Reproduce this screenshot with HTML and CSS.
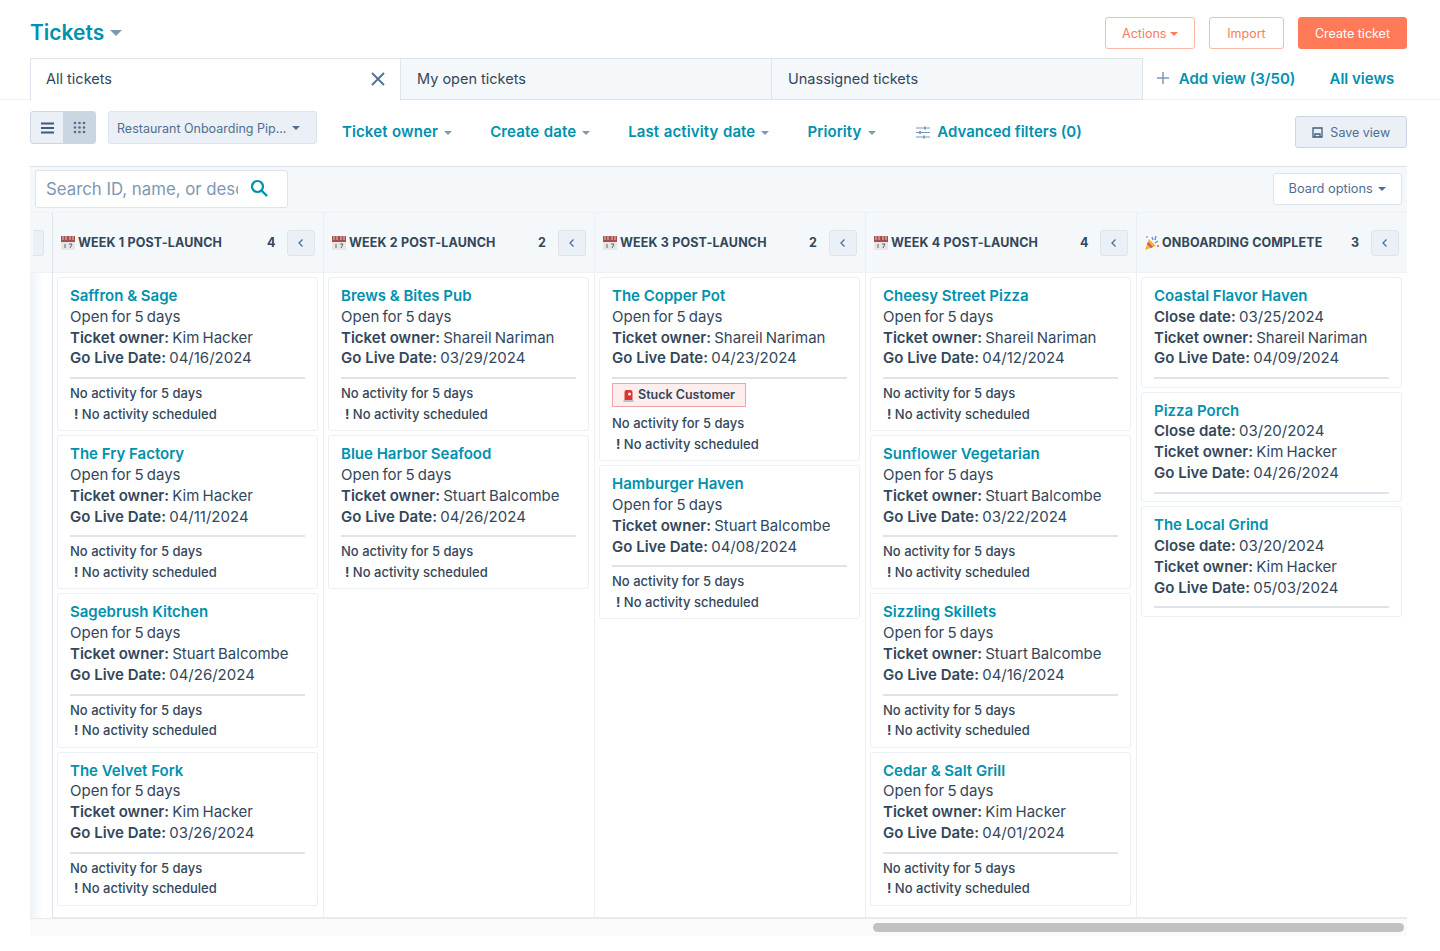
FILE: index.html
```html
<!DOCTYPE html>
<html lang="en">
<head>
    <meta charset="UTF-8">
    <meta name="viewport" content="width=device-width, initial-scale=1.0">
    <title>Tickets</title>
    <link rel="stylesheet" href="styles.css">
</head>
<body>
    <svg width="0" height="0" class="defs">
        <symbol id="cal" viewBox="0 0 16 16">
            <rect x="1" y="1" width="14" height="14" fill="#e8e6e4"/>
            <rect x="1" y="1" width="14" height="6" fill="#a5504f"/>
            <path d="M3 1v4M6 1v4M10 1v4M13 1v4" stroke="#e3c6c4" stroke-width="1"/>
            <path d="M5 9v4M9 9h3l-2 4" stroke="#5f6b78" stroke-width="1" fill="none"/>
        </symbol>
        <symbol id="back" viewBox="0 0 10 12">
            <path d="M6.500 2.500 3 6l3.500 3.500" stroke="#506e91" stroke-width="1.300" fill="none"/>
        </symbol>
    </svg>

    <header class="top">
        <h1 class="title">Tickets <span class="caret caret-big"></span></h1>
        <div class="actions">
            <button class="btn btn-line">Actions <span class="caret caret-orange"></span></button>
            <button class="btn btn-line btn-import">Import</button>
            <button class="btn btn-fill">Create ticket</button>
        </div>
    </header>

    <nav class="tabs">
        <div class="tab tab-active">All tickets
            <svg class="close" width="14" height="14" viewBox="0 0 14 14"><path d="M1 1l12 12M13 1 1 13" stroke="#506e91" stroke-width="1.800"/></svg>
        </div>
        <div class="tab">My open tickets</div>
        <div class="tab">Unassigned tickets</div>
        <div class="tab-links">
            <a class="add-view"><svg width="12" height="12" viewBox="0 0 12 12"><path d="M6 0v12M0 6h12" stroke="#7c98b6" stroke-width="1.500"/></svg> Add view (3/50)</a>
            <a>All views</a>
        </div>
    </nav>

    <section class="filters">
        <div class="toggle">
            <span class="toggle-item">
                <svg width="13" height="12" viewBox="0 0 13 12"><path d="M0 1.500h13M0 6h13M0 10.500h13" stroke="#425b76" stroke-width="2.200"/></svg>
            </span>
            <span class="toggle-item toggle-on">
                <svg width="13" height="13" viewBox="0 0 13 13" fill="#506e91"><circle cx="2" cy="2" r="1.300"/><circle cx="6.500" cy="2" r="1.300"/><circle cx="11" cy="2" r="1.300"/><circle cx="2" cy="6.500" r="1.300"/><circle cx="6.500" cy="6.500" r="1.300"/><circle cx="11" cy="6.500" r="1.300"/><circle cx="2" cy="11" r="1.300"/><circle cx="6.500" cy="11" r="1.300"/><circle cx="11" cy="11" r="1.300"/></svg>
            </span>
        </div>
        <div class="pipeline">Restaurant Onboarding Pip... <span class="caret caret-dark"></span></div>
        <div class="filter-links">
            <a>Ticket owner <span class="caret"></span></a>
            <a>Create date <span class="caret"></span></a>
            <a>Last activity date <span class="caret"></span></a>
            <a>Priority <span class="caret"></span></a>
            <a class="advanced">
                <svg width="14" height="13" viewBox="0 0 14 13"><path d="M0 2h14M0 6.500h14M0 11h14" stroke="#7c98b6" stroke-width="1.200"/><path d="M9 .5v3M4 5v3M8 9.500v3" stroke="#7c98b6" stroke-width="1.800"/></svg>
                Advanced filters (0)
            </a>
        </div>
        <button class="btn-save">
            <svg width="11" height="11" viewBox="0 0 11 11"><path d="M1 1h9v9H1zM3 10V7h5v3" stroke="#425b76" stroke-width="1.300" fill="none"/></svg>
            Save view
        </button>
    </section>

    <section class="board">
        <div class="board-tools">
            <div class="search">
                <input class="search-input" type="text" placeholder="Search ID, name, or description">
                <svg width="19" height="19" viewBox="0 0 19 19"><circle cx="7.500" cy="7.500" r="5.500" stroke="#0091ae" stroke-width="2.200" fill="none"/><path d="M11.500 11.500 17 17" stroke="#0091ae" stroke-width="2.400"/></svg>
            </div>
            <button class="board-options">Board options <span class="caret caret-dark"></span></button>
        </div>

        <div class="columns">
            <div class="col col-stub">
                <div class="col-head"><span class="stub-btn"></span></div>
                <div class="col-body"></div>
            </div>

            <div class="col">
                <div class="col-head">
                    <svg class="emoji"><use href="#cal"/></svg>
                    <span class="col-name">WEEK 1 POST-LAUNCH</span>
                    <span class="col-count">4</span>
                    <span class="col-btn"><svg width="10" height="12"><use href="#back"/></svg></span>
                </div>
                <div class="col-body">
                    <article class="card">
                        <a class="card-name">Saffron &amp; Sage</a>
                        <p>Open for 5 days</p>
                        <p><b>Ticket owner:</b> Kim Hacker</p>
                        <p><b>Go Live Date:</b> 04/16/2024</p>
                        <hr>
                        <p class="note">No activity for 5 days</p>
                        <p class="note note-warn"><i>!</i> No activity scheduled</p>
                    </article>
                    <article class="card">
                        <a class="card-name">The Fry Factory</a>
                        <p>Open for 5 days</p>
                        <p><b>Ticket owner:</b> Kim Hacker</p>
                        <p><b>Go Live Date:</b> 04/11/2024</p>
                        <hr>
                        <p class="note">No activity for 5 days</p>
                        <p class="note note-warn"><i>!</i> No activity scheduled</p>
                    </article>
                    <article class="card">
                        <a class="card-name">Sagebrush Kitchen</a>
                        <p>Open for 5 days</p>
                        <p><b>Ticket owner:</b> Stuart Balcombe</p>
                        <p><b>Go Live Date:</b> 04/26/2024</p>
                        <hr>
                        <p class="note">No activity for 5 days</p>
                        <p class="note note-warn"><i>!</i> No activity scheduled</p>
                    </article>
                    <article class="card">
                        <a class="card-name">The Velvet Fork</a>
                        <p>Open for 5 days</p>
                        <p><b>Ticket owner:</b> Kim Hacker</p>
                        <p><b>Go Live Date:</b> 03/26/2024</p>
                        <hr>
                        <p class="note">No activity for 5 days</p>
                        <p class="note note-warn"><i>!</i> No activity scheduled</p>
                    </article>
                </div>
            </div>

            <div class="col">
                <div class="col-head">
                    <svg class="emoji"><use href="#cal"/></svg>
                    <span class="col-name">WEEK 2 POST-LAUNCH</span>
                    <span class="col-count">2</span>
                    <span class="col-btn"><svg width="10" height="12"><use href="#back"/></svg></span>
                </div>
                <div class="col-body">
                    <article class="card">
                        <a class="card-name">Brews &amp; Bites Pub</a>
                        <p>Open for 5 days</p>
                        <p><b>Ticket owner:</b> Shareil Nariman</p>
                        <p><b>Go Live Date:</b> 03/29/2024</p>
                        <hr>
                        <p class="note">No activity for 5 days</p>
                        <p class="note note-warn"><i>!</i> No activity scheduled</p>
                    </article>
                    <article class="card">
                        <a class="card-name">Blue Harbor Seafood</a>
                        <p>Open for 5 days</p>
                        <p><b>Ticket owner:</b> Stuart Balcombe</p>
                        <p><b>Go Live Date:</b> 04/26/2024</p>
                        <hr>
                        <p class="note">No activity for 5 days</p>
                        <p class="note note-warn"><i>!</i> No activity scheduled</p>
                    </article>
                </div>
            </div>

            <div class="col">
                <div class="col-head">
                    <svg class="emoji"><use href="#cal"/></svg>
                    <span class="col-name">WEEK 3 POST-LAUNCH</span>
                    <span class="col-count">2</span>
                    <span class="col-btn"><svg width="10" height="12"><use href="#back"/></svg></span>
                </div>
                <div class="col-body">
                    <article class="card">
                        <a class="card-name">The Copper Pot</a>
                        <p>Open for 5 days</p>
                        <p><b>Ticket owner:</b> Shareil Nariman</p>
                        <p><b>Go Live Date:</b> 04/23/2024</p>
                        <hr>
                        <span class="tag">
                            <svg width="11" height="13" viewBox="0 0 11 13"><path d="M1.500 3a2 2 0 0 1 2-2h4a2 2 0 0 1 2 2v8h-8z" fill="#e0322f"/><rect x="0.500" y="11" width="10" height="2" fill="#b9c0c8"/><circle cx="6.500" cy="5" r="1.500" fill="#fff"/></svg>
                            Stuck Customer
                        </span>
                        <p class="note">No activity for 5 days</p>
                        <p class="note note-warn"><i>!</i> No activity scheduled</p>
                    </article>
                    <article class="card">
                        <a class="card-name">Hamburger Haven</a>
                        <p>Open for 5 days</p>
                        <p><b>Ticket owner:</b> Stuart Balcombe</p>
                        <p><b>Go Live Date:</b> 04/08/2024</p>
                        <hr>
                        <p class="note">No activity for 5 days</p>
                        <p class="note note-warn"><i>!</i> No activity scheduled</p>
                    </article>
                </div>
            </div>

            <div class="col">
                <div class="col-head">
                    <svg class="emoji"><use href="#cal"/></svg>
                    <span class="col-name">WEEK 4 POST-LAUNCH</span>
                    <span class="col-count">4</span>
                    <span class="col-btn"><svg width="10" height="12"><use href="#back"/></svg></span>
                </div>
                <div class="col-body">
                    <article class="card">
                        <a class="card-name">Cheesy Street Pizza</a>
                        <p>Open for 5 days</p>
                        <p><b>Ticket owner:</b> Shareil Nariman</p>
                        <p><b>Go Live Date:</b> 04/12/2024</p>
                        <hr>
                        <p class="note">No activity for 5 days</p>
                        <p class="note note-warn"><i>!</i> No activity scheduled</p>
                    </article>
                    <article class="card">
                        <a class="card-name">Sunflower Vegetarian</a>
                        <p>Open for 5 days</p>
                        <p><b>Ticket owner:</b> Stuart Balcombe</p>
                        <p><b>Go Live Date:</b> 03/22/2024</p>
                        <hr>
                        <p class="note">No activity for 5 days</p>
                        <p class="note note-warn"><i>!</i> No activity scheduled</p>
                    </article>
                    <article class="card">
                        <a class="card-name">Sizzling Skillets</a>
                        <p>Open for 5 days</p>
                        <p><b>Ticket owner:</b> Stuart Balcombe</p>
                        <p><b>Go Live Date:</b> 04/16/2024</p>
                        <hr>
                        <p class="note">No activity for 5 days</p>
                        <p class="note note-warn"><i>!</i> No activity scheduled</p>
                    </article>
                    <article class="card">
                        <a class="card-name">Cedar &amp; Salt Grill</a>
                        <p>Open for 5 days</p>
                        <p><b>Ticket owner:</b> Kim Hacker</p>
                        <p><b>Go Live Date:</b> 04/01/2024</p>
                        <hr>
                        <p class="note">No activity for 5 days</p>
                        <p class="note note-warn"><i>!</i> No activity scheduled</p>
                    </article>
                </div>
            </div>

            <div class="col">
                <div class="col-head">
                    <svg class="emoji" viewBox="0 0 16 16">
                        <path d="M1 15 5 4l7 7z" fill="#f0b43c"/>
                        <path d="M4 7l5 5-2 1-4-4z" fill="#d9534f"/>
                        <path d="M8 2l1 3M12 1l-1 4M14 6l-3 2" stroke="#6f8fd0" stroke-width="1.400"/>
                        <circle cx="14" cy="11" r="1" fill="#d9534f"/>
                        <circle cx="3" cy="2" r="1" fill="#e58bb0"/>
                    </svg>
                    <span class="col-name">ONBOARDING COMPLETE</span>
                    <span class="col-count">3</span>
                    <span class="col-btn"><svg width="10" height="12"><use href="#back"/></svg></span>
                </div>
                <div class="col-body">
                    <article class="card">
                        <a class="card-name">Coastal Flavor Haven</a>
                        <p><b>Close date:</b> 03/25/2024</p>
                        <p><b>Ticket owner:</b> Shareil Nariman</p>
                        <p><b>Go Live Date:</b> 04/09/2024</p>
                        <hr class="hr-end">
                    </article>
                    <article class="card">
                        <a class="card-name">Pizza Porch</a>
                        <p><b>Close date:</b> 03/20/2024</p>
                        <p><b>Ticket owner:</b> Kim Hacker</p>
                        <p><b>Go Live Date:</b> 04/26/2024</p>
                        <hr class="hr-end">
                    </article>
                    <article class="card">
                        <a class="card-name">The Local Grind</a>
                        <p><b>Close date:</b> 03/20/2024</p>
                        <p><b>Ticket owner:</b> Kim Hacker</p>
                        <p><b>Go Live Date:</b> 05/03/2024</p>
                        <hr class="hr-end">
                    </article>
                </div>
            </div>
        </div>

        <div class="scrollbar"><span class="thumb"></span></div>
    </section>
</body>
</html>
```

FILE: styles.css
```css
* {
    box-sizing: border-box;
}

body {
    margin: 0;
    height: 951px;
    overflow: hidden;
    background: #fff;
    color: #33475b;
    font-family: Inter, "Open Sans", sans-serif;
    font-size: 15px;
}

.defs {
    position: absolute;
}

button {
    font-family: inherit;
}

/* carets */
.caret {
    display: inline-block;
    width: 0;
    height: 0;
    margin-left: 1.500px;
    vertical-align: 2px;
    border-left: 4px solid transparent;
    border-right: 4px solid transparent;
    border-top: 4px solid #7c98b6;
}

.caret-big {
    margin-left: 0;
    border-left-width: 6px;
    border-right-width: 6px;
    border-top-width: 6px;
    vertical-align: 4px;
}

.caret-orange {
    margin-left: 0;
    border-top-color: #ff7a59;
}

.caret-dark {
    margin-left: 2px;
    border-top-color: #506e91;
}

/* header */
.top {
    display: flex;
    justify-content: space-between;
    height: 58px;
    padding: 17px 33px 0 30px;
}

.title {
    margin: 0;
    color: #0091ae;
    font-size: 21px;
    font-weight: 600;
    line-height: 32px;
}

.actions {
    display: flex;
    gap: 14px;
    height: 32px;
}

.btn {
    height: 32px;
    padding: 0 16px;
    border: 1px solid #ff7a59;
    border-radius: 3px;
    background: #fff;
    color: #ff7a59;
    font-size: 12.500px;
}

.btn-line {
    border-color: #ffb8a6;
}

.btn-import {
    width: 75px;
    padding: 0;
}

.btn-fill {
    background: #ff7a59;
    color: #fff;
}

/* tabs */
.tabs {
    display: flex;
    height: 42px;
    padding-left: 30px;
    border-bottom: 1px solid #eef2f6;
}

.tab {
    display: flex;
    align-items: center;
    justify-content: space-between;
    width: 371px;
    height: 42px;
    padding: 0 15px 2px 16px;
    border: 1px solid #dfe3eb;
    border-left: 0;
    background: #f5f8fa;
    font-size: 14.500px;
}

.tab-active {
    padding-left: 15px;
    background: #fff;
    border-left: 1px solid #dfe3eb;
    border-bottom: 0;
}

.tab-links {
    display: flex;
    gap: 34px;
    padding: 11px 0 0 14px;
    color: #0091ae;
    font-size: 15px;
    font-weight: 600;
}

.add-view svg {
    margin-right: 6px;
}

/* filter row */
.filters {
    display: flex;
    align-items: flex-start;
    height: 66px;
    padding: 11px 33px 0 30px;
}

.toggle {
    display: flex;
    height: 33px;
    border: 1px solid #cbd6e2;
    border-radius: 3px;
    background: #eaf0f6;
}

.toggle-item {
    display: flex;
    align-items: center;
    justify-content: center;
    width: 32px;
}

.toggle-on {
    background: #cbd6e2;
}

.pipeline {
    display: flex;
    align-items: center;
    gap: 4px;
    width: 209px;
    height: 33px;
    margin-left: 12px;
    padding: 1px 0 0 8px;
    border: 1px solid #dfe3eb;
    border-radius: 3px;
    background: #eaf0f6;
    color: #506e91;
    font-size: 12.500px;
}

.filter-links {
    display: flex;
    align-items: center;
    gap: 38px;
    height: 40px;
    margin-left: 25px;
    color: #0091ae;
    font-size: 15px;
    font-weight: 600;
    letter-spacing: .1px;
    word-spacing: .7px;
}

.advanced {
    margin-left: 2px;
    letter-spacing: 0;
    word-spacing: 0;
}

.advanced svg {
    margin-right: 4px;
    vertical-align: -2px;
}

.btn-save {
    width: 112px;
    height: 32px;
    margin: 5px 0 0 auto;
    padding-top: 2px;
    border: 1px solid #cbd6e2;
    border-radius: 3px;
    background: #eaf0f6;
    color: #506e91;
    font-size: 12.500px;
}

.btn-save svg {
    margin-right: 4px;
    vertical-align: -1px;
}

/* board */
.board {
    width: 1377px;
    margin-left: 30px;
    border-top: 1px solid #dfe3eb;
}

.board-tools {
    display: flex;
    align-items: center;
    justify-content: space-between;
    height: 45px;
    padding: 0 5px 2px;
    background: #f5f8fa;
}

.search {
    display: flex;
    align-items: center;
    width: 253px;
    height: 38px;
    padding: 0 10px;
    border: 1px solid #dfe3eb;
    border-radius: 3px;
    background: #fff;
}

.search-input {
    width: 192px;
    margin-right: 12px;
    padding: 0;
    border: 0;
    outline: 0;
    background: none;
    font-family: inherit;
    font-size: 16.800px;
}

.search-input::placeholder {
    color: #7c98b6;
    opacity: 1;
}

.board-options {
    width: 129px;
    height: 32px;
    border: 1px solid #dfe3eb;
    border-radius: 3px;
    background: #fff;
    color: #506e91;
    font-size: 12.800px;
}

.columns {
    display: flex;
    height: 707px;
    border-top: 1px solid #eef2f6;
    border-bottom: 2px solid #e5eaf0;
}

.col {
    flex: none;
    width: 271px;
    border-right: 1px solid #eaf0f6;
}

.col:last-child {
    width: 270px;
    border-right: 0;
}

.col-stub {
    width: 23px;
    border-right: 1px solid #dfe3eb;
}

.col-stub .col-body {
    background: linear-gradient(90deg, #eef3f8, #fff 60%);
}

.stub-btn {
    display: block;
    width: 11px;
    height: 26px;
    margin-left: 3px;
    border: 1px solid #dfe3eb;
    border-left: 0;
    border-radius: 0 3px 3px 0;
    background: #eaf0f6;
}

.col-head {
    display: flex;
    align-items: center;
    height: 60px;
    padding: 0 8px 0 7px;
    border-bottom: 1px solid #eef2f6;
    background: #f5f8fa;
}

.col-stub .col-head {
    padding: 0;
}

.emoji {
    flex: none;
    width: 16px;
    height: 16px;
    margin-right: 2px;
}

.col-name {
    flex: 1;
    font-size: 12.500px;
    font-weight: 700;
    letter-spacing: .15px;
}

.col-count {
    width: 8px;
    margin-right: 12px;
    font-size: 12.500px;
    font-weight: 700;
}

.col-btn {
    display: flex;
    align-items: center;
    justify-content: center;
    width: 28px;
    height: 26px;
    border: 1px solid #dfe3eb;
    border-radius: 3px;
    background: #eaf0f6;
}

.col-body {
    display: flex;
    flex-direction: column;
    gap: 4px;
    height: 645px;
    padding: 4px 5px 4px 4px;
}

/* cards */
.card {
    padding: 8px 12px 6px;
    border: 1px solid #eaf0f6;
    border-radius: 3px;
    background: #fff;
    line-height: 20.800px;
}

.card p {
    margin: 0;
    word-spacing: -1px;
}

.card b {
    font-weight: 600;
    word-spacing: 0;
}

.card-name {
    color: #0091ae;
    font-weight: 600;
}

.card hr {
    height: 2px;
    margin: 8px 0 4px;
    border: 0;
    background: #dfe3eb;
}

.card .hr-end {
    margin-bottom: 1.400px;
}

.card .note {
    font-size: 13px;
    font-weight: 500;
    line-height: 20.500px;
    word-spacing: 0;
}

.note-warn {
    padding-left: 4px;
}

.note i {
    font-style: normal;
    font-weight: 700;
}

.tag {
    display: flex;
    align-items: center;
    gap: 4px;
    width: 134px;
    height: 24px;
    margin: 4px 0 6px;
    padding-left: 10px;
    border: 1px solid #f2a5a9;
    background: #fdeded;
    font-size: 12.500px;
    font-weight: 600;
}

.scrollbar {
    display: flex;
    justify-content: flex-end;
    height: 17px;
    padding: 4px 3px 0 0;
    background: #fafafa;
}

.thumb {
    width: 531px;
    height: 9px;
    border-radius: 5px;
    background: #c1c1c1;
}
```
